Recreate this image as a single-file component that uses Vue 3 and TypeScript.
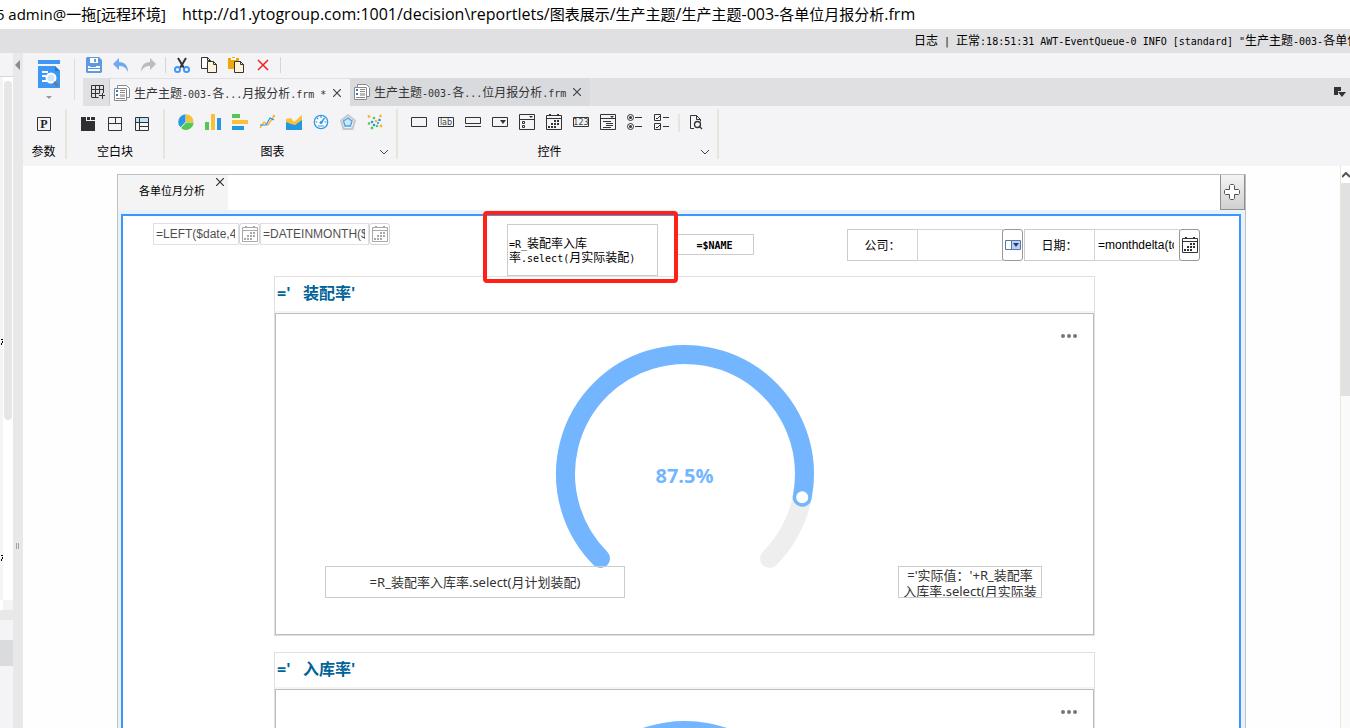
<script setup lang="ts">
import { h } from 'vue'

interface Icon { name: string; art: string }
interface Block { title: string; plan: string; actual: string }

// Latin and CJK runs are sized separately, so each script keeps its own width
const Duo = (props: { text: string }) =>
  h('span', { class: 'duo' }, props.text.split(/([\u2e80-\uffff]+)/).filter(Boolean).map((part) =>
    /[\u2e80-\uffff]/.test(part) ? part : h('span', { class: 'half' }, part)))
Duo.props = ['text']

const ink = 'fill="none" stroke="#333" stroke-width="1"'

const fileIcons: Icon[] = [
  { name: '保存', art: '<path fill="#5f9ae0" d="M1 0h12l3 3v12l-1 1H1l-1-1V1z"/><path fill="#fff" d="M4 1h8v5H4zM2 9h12v5H2z"/><path fill="#5f9ae0" d="M8 2h2v3H8zM2 11h12v1H2zM4 9h6v1H4z"/>' },
  { name: '撤销', art: '<path fill="#6faaf0" d="M6 1v4c6 0 9 4 9 10-2-4-4-6-9-6v4L0 7z"/>' },
  { name: '重做', art: '<path fill="#bcbcbc" d="M10 1v4C4 5 1 9 1 15c2-4 4-6 9-6v4l6-6z"/>' },
]
const editIcons: Icon[] = [
  { name: '剪切', art: '<path d="M4 1l6 10M12 1L6 11" stroke="#333" stroke-width="2" fill="none"/><circle cx="3.500" cy="12.500" r="2.500" fill="#fff" stroke="#3d97f5" stroke-width="2"/><circle cx="12.500" cy="12.500" r="2.500" fill="#fff" stroke="#3d97f5" stroke-width="2"/>' },
  { name: '复制', art: `<path ${ink} style="fill:#fff" d="M.5.5h6l3 3v8h-9z"/><path ${ink} style="fill:#fdf3da" d="M6.500 4.500h6l3 3v8h-9z"/><path ${ink} d="M6.500.5v3h3M12.500 4.500v3h3"/>` },
  { name: '粘贴', art: `<path fill="#f2a60d" d="M0 1h11v11H0z"/><path fill="#fff" d="M3 0h5v3H3z"/><path fill="#f2a60d" d="M4 0h3v1H4z"/><path ${ink} style="fill:#fdf3da" d="M6.500 4.500h6l3 3v8h-9z"/><path ${ink} d="M12.500 4.500v3h3"/>` },
  { name: '删除', art: '<path d="M3 3l10 10M13 3L3 13" stroke="#ee2222" stroke-width="1.500" fill="none"/>' },
]
const blankIcons: Icon[] = [
  { name: '报表块', art: '<path fill="#2f2f32" d="M1 1h5v4h9v10H1z"/><path fill="#2f2f32" d="M7 1h3v3H7zM11 1h4v3h-4z"/>' },
  { name: '标签块', art: `<path ${ink} d="M1.500 1.500h13v13h-13zM1.500 7.500h13M8.500 1.500v6"/>` },
  { name: '绝对布局', art: `<path fill="#bfe3fa" d="M2 2h12v4H2z"/><path ${ink} d="M1.500 1.500h13v13h-13zM1.500 6.500h13M5.500 1.500v13M5.500 10.500h9"/>` },
]
const chartIcons: Icon[] = [
  { name: '饼图', art: '<path fill="#2a98e0" d="M7.500 8V.300a7.700 7.700 0 0 0-5 13z"/><path fill="#f9c03a" d="M8 8V.300A7.600 7.600 0 0 1 15.500 8z"/><path fill="#55c853" d="M8 8.500h7.500A7.500 7.500 0 0 1 3 14z"/>' },
  { name: '柱形图', art: '<path fill="#55c853" d="M0 8h4v8H0z"/><path fill="#f9c03a" d="M6 0h4v16H6z"/><path fill="#2098e3" d="M12 4h4v12h-4z"/>' },
  { name: '条形图', art: '<path fill="#55c853" d="M0 0h8v4H0z"/><path fill="#f9c03a" d="M0 6h16v4H0z"/><path fill="#2098e3" d="M0 12h12v4H0z"/>' },
  { name: '折线图', art: '<path d="M1 14l4-6 4 3 6-9" stroke="#f9b53a" fill="none" stroke-width="1.400"/><path d="M1 11l6 0 4-7 4 2" stroke="#2098e3" fill="none" stroke-width="1.200"/><circle cx="15" cy="2" r="1.200" fill="#f9b53a"/>' },
  { name: '面积图', art: '<path fill="#f9c03a" d="M0 5l5-1 3 4 8-7v10H0z"/><path fill="#2098e3" d="M0 8l5 2 4 1 7-5v10H0z"/>' },
  { name: '仪表盘', art: '<circle cx="8" cy="8" r="6.700" fill="#fff" stroke="#2f9be4" stroke-width="1.300"/><path d="M8 2v2M2.500 8h2M11.500 8h2M4 4l1.200 1.200M5 12h6" stroke="#2f9be4" fill="none" stroke-width="1.200"/><path d="M8 9l3.500-5" stroke="#2f9be4" fill="none" stroke-width="1.500"/><circle cx="8" cy="8.500" r="1.500" fill="#2f9be4"/>' },
  { name: '雷达图', art: '<path d="M8 1l7 5.500L12.500 15h-9L1 6.500z" fill="#f0f1f3" stroke="#c3c6ca" stroke-width="1.800"/><path d="M8 1v8M8 9l7-2.500M8 9l4.500 6M8 9l-4.500 6M8 9L1 6.500" stroke="#c3d3de" stroke-width=".6"/><path d="M8 4l4 3-1.500 5H5L3.500 7z" fill="#cfe6f7" stroke="#45a5e6" stroke-width="1.300"/>' },
  { name: '散点图', art: '<g fill="#f9b53a"><circle cx="2" cy="2.500" r="1.400"/><circle cx="13.500" cy="2" r="1.400"/><circle cx="9" cy="7" r="1.300"/><circle cx="14" cy="12" r="1.400"/></g><g fill="#55c853"><circle cx="7" cy="4" r="1.300"/><circle cx="2" cy="9.500" r="1.300"/><circle cx="5" cy="14" r="1.400"/><circle cx="10" cy="12" r="1.300"/></g><g fill="#2098e3"><circle cx="5" cy="8" r="1.300"/><circle cx="12.500" cy="6" r="1.300"/><circle cx="7" cy="11" r="1.300"/><circle cx="11" cy="9" r="1.100"/></g>' },
]
const calendarArt = `<path ${ink} d="M.5 1.500h15v14H.5zM.5 4.500h15"/><path fill="#333" d="M3 0h2v2H3zM11 0h2v2h-2zM8 6h2v2H8zM5 9h2v2H5zM8 9h2v2H8zM11 6h2v2h-2zM11 9h2v2h-2zM2 12h2v2H2zM5 12h2v2H5zM8 12h2v2H8z"/>`
const widgetIcons: Icon[] = [
  { name: '文本控件', art: `<path ${ink} d="M.5 3.500h15v9H.5z"/>` },
  { name: '标签控件', art: `<path ${ink} d="M.5 3.500h15v9H.5z"/><text x="8" y="11" text-anchor="middle" font-size="8" font-family="DejaVu Sans" fill="#444">lab</text>` },
  { name: '按钮控件', art: `<path ${ink} d="M.5 3.500h15v6H.5zM0 12.500h16"/>` },
  { name: '下拉框', art: `<path ${ink} d="M.5 3.500h15v9H.5z"/><path fill="#333" d="M8 6h6l-3 4z"/>` },
  { name: '下拉复选框', art: `<path ${ink} d="M.5.5h15v15H.5zM.5 5.500h15M3.500 7.500h2v2h-2zM3.500 11.500h2v2h-2z"/><path fill="#333" d="M10 2h4l-2 2z"/>` },
  { name: '日期控件', art: calendarArt },
  { name: '数字控件', art: `<path ${ink} d="M.5 3.500h15v9H.5z"/><text x="8" y="11" text-anchor="middle" font-size="8" font-family="DejaVu Sans" fill="#444">123</text>` },
  { name: '下拉树', art: `<path ${ink} d="M.5.5h15v15H.5zM.5 4.500h15M3 7.500h8M6 9.500h7M6 11.500h7M3 13.500h8"/><path fill="#333" d="M10 2h4l-2 2z"/>` },
  { name: '单选按钮组', art: `<circle cx="3.500" cy="3.500" r="3" ${ink}/><circle cx="3.500" cy="12.500" r="3" ${ink}/><circle cx="3.500" cy="3.500" r="1.500" fill="#333"/><circle cx="3.500" cy="12.500" r="1.500" fill="#333"/><path ${ink} d="M8 3.500h7M8 12.500h7"/>` },
  { name: '复选框组', art: `<path ${ink} d="M.5.5h6v6h-6zM.5 9.500h6v6h-6zM2 4l1 1 3-3M2 13l1 1 3-3M9 3.500h6M9 12.500h6"/>` },
]

const blocks: Block[] = [
  { title: "='   装配率'", plan: '=R_装配率入库率.select(月计划装配)', actual: "='实际值：'+R_装配率入库率.select(月实际装配)" },
  { title: "='   入库率'", plan: '=R_装配率入库率.select(月计划入库)', actual: "='实际值：'+R_装配率入库率.select(月实际入库)" },
]
const tabs = [
  { label: '生产主题-003-各...月报分析.frm *', active: true },
  { label: '生产主题-003-各...位月报分析.frm', active: false },
]
</script>

<template>
  <div class="app">
    <header class="title-bar">
      <span class="user">5 admin@一拖[远程环境]</span>
      <Duo class="url" text="http://d1.ytogroup.com:1001/decision\reportlets/图表展示/生产主题/生产主题-003-各单位月报分析.frm" />
    </header>
    <div class="log-bar">
      <div class="log"><Duo text='日志 | 正常:18:51:31 AWT-EventQueue-0 INFO [standard] "生产主题-003-各单位月报分析.frm"' /></div>
    </div>

    <div class="main">
      <aside class="side">
        <div class="side-head"></div>
        <div class="side-list">
          <div class="side-rows">
            <svg v-for="n in 2" :key="n" width="3" height="6" viewBox="0 0 3 6"><path d="M1 0h2v1H1zM2 2h1v2H2zM1 4h1v2H1z" fill="#000" /></svg>
          </div>
          <div class="side-scroll"><div class="side-thumb"></div></div>
        </div>
        <div class="side-corner"></div>
        <div class="side-split"></div>
        <div class="side-foot"><div class="side-selected"></div></div>
      </aside>
      <div class="splitter">
        <svg width="6" height="10" viewBox="0 0 6 10"><path d="M5 0v10L0 5z" fill="#8b8b8b" /></svg>
        <svg class="grip" width="4" height="6" viewBox="0 0 4 6"><path d="M0 0h1v6H0zM2 0h1v6H2z" fill="#a2a2a2" /></svg>
      </div>

      <div class="work">
        <div class="top">
          <button class="template" aria-label="模板">
            <svg width="22" height="28" viewBox="0 0 22 28">
              <path fill="#3d97f5" d="M0 0h22v4H0zM0 6h17l5 5v17H0z" />
              <path fill="#2878cc" d="M17 6l5 5h-5z" />
              <path d="M4 12h6M4 16h4M4 21h12" stroke="#fff" stroke-width="2" />
              <circle cx="13" cy="18" r="4.500" fill="#cfe6fb" stroke="#fff" stroke-width="2" />
              <path d="M16 22l4 4" stroke="#777" stroke-width="2.500" />
            </svg>
            <svg width="6" height="4" viewBox="0 0 6 4"><path d="M0 0h6L3 3z" fill="#999" /></svg>
          </button>
          <div class="top-right">
            <div class="tools">
              <button v-for="i in fileIcons" :key="i.name" :aria-label="i.name"><svg width="16" height="16" viewBox="0 0 16 16" v-html="i.art" /></button>
              <i class="bar"></i>
              <button v-for="i in editIcons" :key="i.name" :aria-label="i.name"><svg width="16" height="16" viewBox="0 0 16 16" v-html="i.art" /></button>
              <i class="bar"></i>
            </div>
            <nav class="tabs">
              <button class="new-tab" aria-label="新建">
                <svg width="14" height="14" viewBox="0 0 14 14"><path d="M.5 12V.5h12V8M.5 4.500h12M4.500.5v12M8.500.5v8M.5 8.500h8M.5 12.500h7M11.500 8v6M8 10.500h6" fill="none" stroke="#333" /></svg>
              </button>
              <div v-for="t in tabs" :key="t.label" class="tab" :class="{ active: t.active }">
                <svg width="16" height="16" viewBox="0 0 16 16">
                  <path d="M3.500.5h9l3 3v9h-12z" fill="#fff" stroke="#888" />
                  <path d="M.5 3.500h12v12H.5z" fill="#fff" stroke="#888" />
                  <path d="M2 5h2v2H2zM2 9h2v2H2z" fill="#3b78b8" />
                  <path d="M6 5.500h5M6 7.500h5M2 13.500h9" stroke="#888" /><path d="M6 9h5v3H6z" fill="#bbb" />
                </svg>
                <Duo :text="t.label" />
                <button aria-label="关闭"><svg width="8" height="8" viewBox="0 0 8 8"><path d="M0 0l8 8M8 0L0 8" stroke="#444" stroke-width="1.200" /></svg></button>
              </div>
              <button class="tab-list" aria-label="标签列表">
                <svg width="12" height="10" viewBox="0 0 12 10"><path d="M0 0h7v4H4v4H0zM4 5h8l-4 5z" fill="#333" /></svg>
              </button>
            </nav>
          </div>
        </div>

        <div class="ribbon">
          <section class="group param">
            <div class="icons low">
              <button aria-label="参数面板"><svg width="16" height="16" viewBox="0 0 16 16"><path d="M1.500 1.500h13v13h-13z" fill="none" stroke="#333" /><text x="8" y="12" text-anchor="middle" font-family="Liberation Serif" font-weight="bold" font-size="12" fill="#222">P</text></svg></button>
            </div>
            <div class="caption">参数</div>
          </section>
          <section class="group blank">
            <div class="icons low"><button v-for="i in blankIcons" :key="i.name" :aria-label="i.name"><svg width="16" height="16" viewBox="0 0 16 16" v-html="i.art" /></button></div>
            <div class="caption">空白块</div>
          </section>
          <section class="group charts">
            <div class="icons"><button v-for="i in chartIcons" :key="i.name" :aria-label="i.name"><svg width="16" height="16" viewBox="0 0 16 16" v-html="i.art" /></button></div>
            <div class="caption">图表</div>
            <button class="more" aria-label="更多图表"><svg width="8" height="5" viewBox="0 0 8 5"><path d="M0 0l4 4 4-4" fill="none" stroke="#444" /></svg></button>
          </section>
          <section class="group widgets">
            <div class="icons">
              <button v-for="i in widgetIcons" :key="i.name" :aria-label="i.name"><svg width="16" height="16" viewBox="0 0 16 16" v-html="i.art" /></button>
              <i class="rule"></i>
              <button aria-label="查询"><svg width="16" height="16" viewBox="0 0 16 16"><path d="M6 14.500H2.500V1.500h6l4 4v2M8.500 1.500v4h4" fill="none" stroke="#333" /><circle cx="9.500" cy="10.500" r="3" fill="none" stroke="#333" stroke-width="1.300" /><path d="M11 12l3 3" stroke="#333" stroke-width="1.300" /></svg></button>
            </div>
            <div class="caption">控件</div>
            <button class="more" aria-label="更多控件"><svg width="8" height="5" viewBox="0 0 8 5"><path d="M0 0l4 4 4-4" fill="none" stroke="#444" /></svg></button>
          </section>
        </div>

        <div class="canvas">
          <div class="form">
            <div class="form-head">
              <div class="form-tab">
                各单位月分析
                <button aria-label="关闭"><svg width="8" height="8" viewBox="0 0 8 8"><path d="M0 0l8 8M8 0L0 8" stroke="#333" stroke-width="1.200" /></svg></button>
              </div>
              <button class="add" aria-label="添加">
                <svg width="16" height="16" viewBox="0 0 16 16"><path d="M5.500 1.500l1-1h3l1 1v4h4l1 1v3l-1 1h-4v4l-1 1h-3l-1-1v-4h-4l-1-1v-3l1-1h4z" fill="#fff" stroke="#555" /></svg>
              </button>
            </div>
            <div class="stage">
              <div class="widget dates">
                <input class="short" aria-label="年" value="=LEFT($date,4)" />
                <button aria-label="选择日期"><svg width="16" height="16" viewBox="0 0 16 16" v-html="calendarArt" /></button>
                <input aria-label="月" value="=DATEINMONTH($date)" />
                <button aria-label="选择日期"><svg width="16" height="16" viewBox="0 0 16 16" v-html="calendarArt" /></button>
              </div>
              <div class="widget name"><Duo text="=$NAME" /></div>
              <div class="widget formula"><Duo text="=R_装配率入库" /><Duo text="率.select(月实际装配)" /></div>
              <div class="mark"></div>
              <div class="widget query">
                <label for="company">公司：</label>
                <input id="company" />
                <button aria-label="选择公司"><svg width="16" height="10" viewBox="0 0 16 10"><path d="M.5.5h15v9H.5z" fill="#fff" stroke="#5577aa" /><path d="M7 1h8v8H7z" fill="#b9d2f0" /><path d="M6.500 0v10" stroke="#5577aa" /><path d="M8 3h6l-3 4z" fill="#223a80" /></svg></button>
                <label for="day">日期：</label>
                <input id="day" value="=monthdelta(today(),-1)" />
                <button aria-label="选择日期"><svg width="16" height="16" viewBox="0 0 16 16" v-html="calendarArt" /></button>
              </div>

              <div class="blocks">
                <article v-for="b in blocks" :key="b.title" class="block">
                  <h2>{{ b.title }}</h2>
                  <div class="chart">
                    <svg class="gauge" width="260" height="226" viewBox="0 0 260 226">
                      <path d="M45.500 214.500A119.500 119.500 0 1 1 214.500 214.500" fill="none" stroke="#eee" stroke-width="19" stroke-linecap="round" />
                      <path d="M45.500 214.500A119.500 119.500 0 1 1 247.200 153.300" fill="none" stroke="#73b6ff" stroke-width="19" stroke-linecap="round" />
                      <circle cx="247.200" cy="153.300" r="6" fill="#fff" />
                      <text x="129.500" y="139" text-anchor="middle">87.5%</text>
                    </svg>
                    <button class="dots" aria-label="菜单"><svg width="16" height="4" viewBox="0 0 16 4"><g fill="#777"><circle cx="2" cy="2" r="2" /><circle cx="8" cy="2" r="2" /><circle cx="14" cy="2" r="2" /></g></svg></button>
                    <div class="tag plan">{{ b.plan }}</div>
                    <div class="tag actual">{{ b.actual }}</div>
                  </div>
                </article>
              </div>
            </div>
          </div>
          <div class="v-scroll">
            <button aria-label="向上滚动"><svg width="8" height="6" viewBox="0 0 8 6"><path d="M0 5l4-4 4 4" fill="none" stroke="#555" stroke-width="2" /></svg></button>
            <div class="v-thumb"></div>
          </div>
        </div>
      </div>
    </div>
  </div>
</template>

<style>
body { margin: 0; overflow: hidden; }
.duo { white-space: pre; font: 12px/14px "DejaVu Sans Mono", "Noto Sans CJK SC", monospace; }
.duo .half { font-size: 10px; line-height: 1px; }
.duo.url { font: 15px/29px "Open Sans", "Noto Sans CJK SC", sans-serif; }
.duo.url .half { font-size: 16px; }
</style>

<style scoped>
.app { height: 100vh; display: flex; flex-direction: column; overflow: hidden; background: #fff; color: #000; font: 12px/16px "Liberation Sans", "Noto Sans CJK SC", sans-serif; }
.app * { box-sizing: border-box; }
button { display: flex; align-items: center; justify-content: center; flex: none; margin: 0; padding: 0; border: 0; background: none; }
svg { display: block; flex: none; }

.title-bar { flex: none; height: 29px; display: flex; gap: 16px; line-height: 29px; font-size: 15px; font-family: "Open Sans", "Noto Sans CJK SC", sans-serif; white-space: nowrap; overflow: hidden; }
.user { flex: none; width: 166px; display: flex; justify-content: flex-end; }
.log-bar { flex: none; height: 24px; display: flex; justify-content: flex-end; background: #e0e0e2; }
.log { width: 436px; overflow: hidden; line-height: 24px; white-space: nowrap; }

.main { flex: 1; min-height: 0; display: flex; }
.side { width: 13px; flex: none; display: flex; flex-direction: column; background: #f4f4f7; }
.side-head { height: 24px; border-bottom: 1px solid #d8d8db; }
.side-list { height: 523px; display: flex; }
.side-rows { width: 3px; display: flex; flex-direction: column; gap: 210px; padding-top: 262px; }
.side-scroll { flex: 1; padding: 4px 1px; background: #fff; }
.side-thumb { height: 339px; border-radius: 4px; background: #e6e6e6; }
.side-corner { height: 10px; border-left: 3px solid #fff; }
.side-split { height: 10px; background: #e8e8e8; }
.side-foot { flex: 1; padding-top: 20px; }
.side-selected { height: 26px; background: #dadbdf; }
.splitter { width: 10px; flex: none; display: flex; flex-direction: column; align-items: center; padding-top: 7px; background: #e8e8e8; }
.grip { margin-top: 473px; }

.work { flex: 1; min-width: 0; display: flex; flex-direction: column; }
.top { flex: none; height: 53px; display: flex; background: #f4f4f7; }
.template { width: 52px; margin: 6px 8px 6px 0; flex-direction: column; gap: 8px; border-right: 1px solid #dcdcde; }
.top-right { flex: 1; min-width: 0; display: flex; flex-direction: column; }
.tools { height: 25px; display: flex; align-items: center; gap: 11px; padding: 0 0 1px 3px; }
.bar { width: 1px; height: 16px; margin: 0 -3px 0 -2px; background: #d5d5d8; }
.tabs { height: 28px; display: flex; background: #e0e0e2; }
.new-tab { width: 27px; padding-left: 4px; border-right: 1px solid #ccccd0; }
.tab { width: 240px; display: flex; align-items: center; gap: 4px; padding-left: 4px; background: #d9dadd; color: #333; }
.tab.active { background: #f4f4f7; border-top: 1px solid #e0e0e2; }
.tab .duo { padding-top: 2px; }
.tab button { margin-left: 3px; }
.tab-list { margin-left: auto; padding-right: 4px; }

.ribbon { flex: none; height: 60px; display: flex; padding-top: 3px; background: #f4f4f7; }
.group { position: relative; height: 50px; border-right: 2px solid #e5e5dd; }
.icons { height: 32px; display: flex; gap: 11px; padding-top: 5px; }
.low { padding-top: 7px; }
.icons button { height: 16px; }
.caption { height: 18px; line-height: 22px; text-align: center; }
.param { width: 44px; }
.param .icons { padding-left: 13px; }
.param .caption { padding-right: 1px; }
.blank { width: 98px; }
.blank .icons { padding-left: 13px; }
.charts { width: 233px; }
.charts .icons { padding-left: 13px; }
.charts .caption, .widgets .caption { padding-right: 16px; }
.widgets { width: 321px; }
.widgets .icons { padding-left: 13px; }
.rule { width: 2px; height: 18px; margin: 0 -3px; background: #e5e5dd; }
.more { position: absolute; right: 8px; bottom: 4px; }

.canvas { flex: 1; min-height: 0; display: flex; background: #fefefe; }
.form { flex: 1; min-width: 0; margin: 8px 94px 0; display: flex; flex-direction: column; border: 1px solid #c0c0c0; border-bottom: 0; background: #e9f2fb; }
.form-head { flex: none; height: 35px; display: flex; justify-content: space-between; background: #fff; }
.form-tab { position: relative; width: 110px; padding-left: 21px; background: #f4f4f4; font-size: 11px; line-height: 32px; }
.form-tab button { position: absolute; right: 4px; top: 3px; }
.add { width: 25px; padding-right: 1px; border: 1px solid #8f8f8f; border-top: 0; background: linear-gradient(#f4f4f4, #d0d0d0); }
.stage { position: relative; flex: 1; min-height: 0; margin: 4px 4px 0 3px; padding: 60px 144px 0 151px; border: 2px solid #3d97fa; border-bottom: 0; background: #fff; }
.widget { position: absolute; display: flex; }
.widget input { min-width: 0; border: 1px solid #d4d4d4; border-radius: 0; background: #fff; padding: 0 5px 0 3px; font: 12px "Liberation Sans", "Noto Sans CJK SC", sans-serif; color: #000; outline: 0; }
.widget button { width: 21px; border: 1px solid #999; border-radius: 3px; background: #fff; }
.dates { left: 30px; top: 7px; height: 22px; opacity: .7; }
.widget.dates input { width: 109px; padding: 0 3px 0 2px; }
.widget.dates .short { width: 86px; }
.dates button { opacity: .6; }
.name { left: 552px; top: 18px; width: 79px; height: 21px; align-items: center; justify-content: center; border: 1px solid #ccc; }
.name .duo { font-weight: bold; }
.formula { flex-direction: column; left: 384px; top: 8px; width: 151px; height: 52px; padding: 12px 0 0 1px; border: 1px solid #ccc; background: #fff; }
.mark { position: absolute; left: 360px; top: -5px; width: 195px; height: 72px; border: 4px solid #ff2115; border-radius: 4px; }
.query { right: 39px; top: 13px; height: 32px; }
.query label { width: 71px; margin-right: -1px; border: 1px solid #ccc; line-height: 32px; text-align: center; }
.widget.query input { width: 86px; }
.query button { margin-left: -1px; }
.query button + label { margin-left: 1px; }

.blocks { display: flex; flex-direction: column; gap: 16px; }
.block { border: 1px solid #e0e0e0; }
.block h2 { height: 36px; margin: 0; padding-left: 2px; border-bottom: 2px solid #f4f4f4; color: #006399; font: bold 16px/32px "Open Sans", "Noto Sans CJK SC", sans-serif; white-space: pre; }
.chart { position: relative; height: 322px; padding-top: 30px; border: 1px solid #bdbdbd; }
.gauge { margin: 0 auto; }
.gauge text { fill: #73b6ff; font: bold 20px "Open Sans", "Noto Sans", sans-serif; }
.dots { position: absolute; right: 16px; top: 20px; }
.tag { position: absolute; top: 252px; height: 32px; overflow: hidden; border: 1px solid #ccc; color: #333; font: 13px/18px "Noto Sans", "Noto Sans CJK SC", sans-serif; text-align: center; }
.plan { left: 49px; width: 300px; line-height: 30px; }
.actual { right: 51px; width: 144px; padding: 0 4px; line-height: 16px; }

.v-scroll { width: 10px; flex: none; border-left: 1px solid #e9e6da; background: #fafafa; }
.v-scroll button { width: 100%; height: 17px; background: #fff; }
.v-thumb { height: 213px; background: #e1e1e1; }
</style>
